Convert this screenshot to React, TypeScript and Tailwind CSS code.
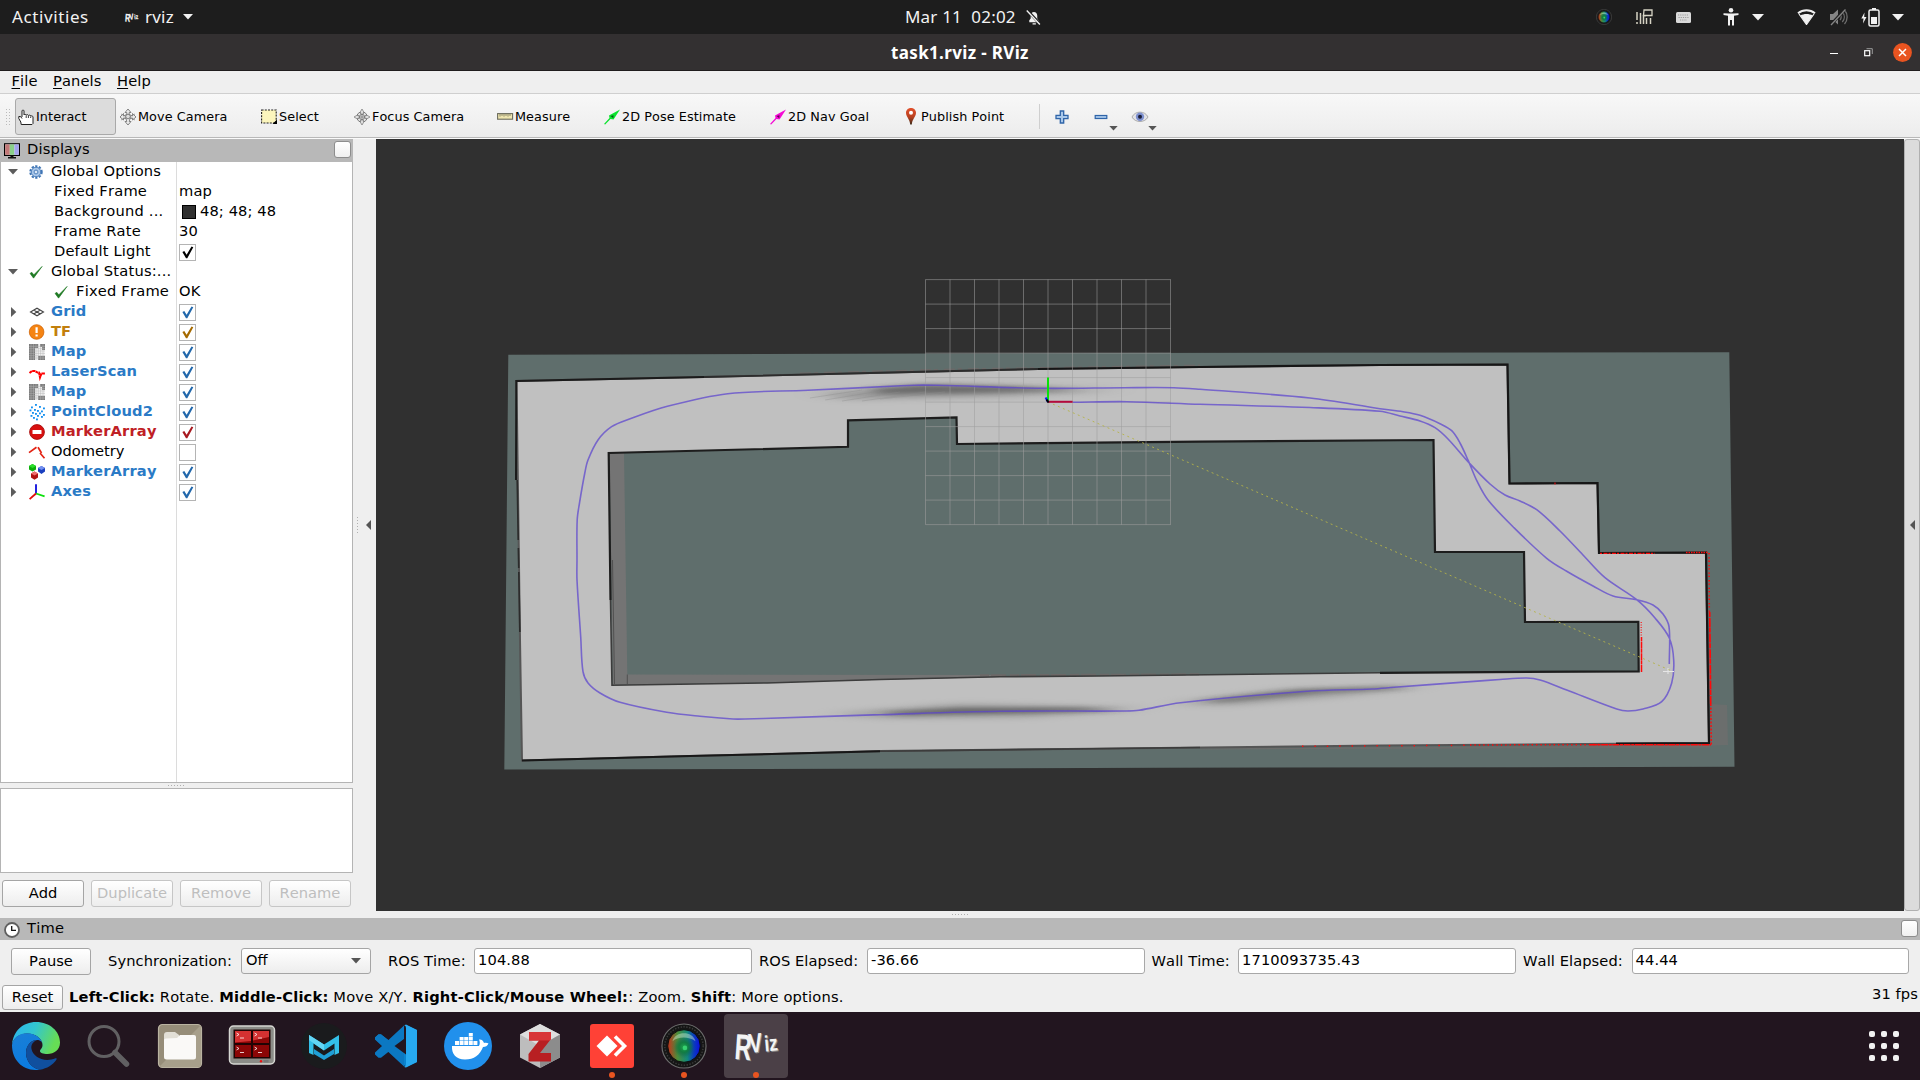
import React from "react";

type Pt = [number, number];

/* Catmull-Rom spline through the given points, as a cubic Bézier path. */
function smooth(p: Pt[]): string {
  let d = `M${p[0][0]} ${p[0][1]}`;
  for (let i = 0; i < p.length - 1; i++) {
    const a = p[Math.max(0, i - 1)];
    const b = p[i];
    const c = p[i + 1];
    const e = p[Math.min(p.length - 1, i + 2)];
    const len = Math.hypot(c[0] - b[0], c[1] - b[1]);
    const t1 = Math.hypot(c[0] - a[0], c[1] - a[1]) || 1;
    const t2 = Math.hypot(e[0] - b[0], e[1] - b[1]) || 1;
    const k = len / 3;
    d += `C${b[0] + ((c[0] - a[0]) / t1) * k} ${b[1] + ((c[1] - a[1]) / t1) * k} ${c[0] - ((e[0] - b[0]) / t2) * k} ${c[1] - ((e[1] - b[1]) / t2) * k} ${c[0]} ${c[1]}`;
  }
  return d;
}

const trajectory: Pt[] = [
  [1072.8, 402.3], [1127, 401.7], [1200, 404.3], [1310, 407.5], [1380, 411.3], [1400, 416], [1420, 421], [1435, 427.7],
  [1448, 439], [1468, 461.7], [1490, 484], [1505, 495], [1520, 501], [1536.7, 509.7], [1560, 531], [1583, 555],
  [1605, 577.7], [1636.7, 599.7], [1655, 618], [1669.3, 638], [1673.7, 660], [1671.7, 683], [1661.7, 701.7],
  [1643, 709], [1628, 711], [1616.7, 709], [1566.7, 690], [1540, 680], [1526.7, 678], [1500, 679.5], [1394, 687.3],
  [1372, 689], [1307, 691.3], [1180.5, 702.7], [1139, 710.3], [1126, 711], [998.6, 711.3], [880, 714.7], [745, 719], [733, 719],
  [700, 716.3], [666.7, 712.3], [620, 702.3], [600, 693], [588, 683], [583, 671.7], [580.7, 636.7], [577, 580],
  [577, 560], [577.2, 520], [579.5, 503], [584.8, 473], [588, 460], [598, 440], [611.6, 426.7], [629.5, 419],
  [667.4, 406.3], [727.7, 393.7], [808, 390.3], [915, 385.2], [937.5, 385.3], [1042, 388.3], [1125, 387.7],
  [1174, 387.7], [1200, 389.3], [1310, 398], [1380, 408.7], [1403, 411.7], [1420, 415.3], [1440, 423.7],
  [1451.7, 430.7], [1460, 443], [1468.3, 460.7], [1477.3, 481.7], [1488, 500], [1513, 526.7], [1546.7, 558.3],
  [1566.7, 571.3], [1593, 586], [1613, 596], [1636.7, 599.7], [1653, 605], [1663, 614], [1669, 626.7], [1669.3, 664],
];

const OUTER =
  "M516.5 381 L704 377 L870 373 L1038 369 L1200 367 L1380 365 L1507.5 364.5 L1509.5 483.5 L1597.5 483 L1599 553 L1706 552.5 L1709 743 L1380 745.5 L1092 748.7 L880 751 L831 752.5 L690 756 L522 760.5 L520 640 Z";
const INNER =
  "M608.7 453 L848 446.8 L848 420.3 L956.5 417.5 L957 444 L1200 441.7 L1433.5 440 L1435 552 L1524 552 L1525 622 L1638 621.8 L1639 671.3 L1380 672.8 L1100 676 L1000 676.8 L880 679.5 L767 683 L612 685.3 Z";

function Viewport() {
  const grid = Array.from({ length: 11 }, (_, i) => i);
  return (
    <svg width={1528} height={772} viewBox="376 139 1528 772" className="block shrink-0 bg-[#303030]">
      <defs>
        <filter id="soft" x="-20%" y="-200%" width="140%" height="500%">
          <feGaussianBlur stdDeviation="9 2.2" />
        </filter>
        <filter id="softer" x="-20%" y="-200%" width="140%" height="500%">
          <feGaussianBlur stdDeviation="14 3" />
        </filter>
      </defs>
      <path d="M508.3 354.7 L1110 353 L1729.3 352.2 L1734.5 766.8 L1160 767.8 L504.3 769.6 Z" fill="#5f6e6c" />
      <path d={`${OUTER} ${INNER}`} fill="#c0c0c0" fillRule="evenodd" />

      {/* uncertain cells next to the inner and outer walls */}
      <path d="M609.5 454 L624 453 L627.3 674.5 L1000 675 L1000 677 L767 682.5 L613 685 Z" fill="#747474" />
      <path d="M1711 704 L1727 705 L1728 745 L1711 745.5 Z" fill="#6b6e6d" />
      <path d="M1200 748.5 L1710 745.5 L1710 747.5 L1200 749.5 Z" fill="#6c6c6b" />
      <path d="M800 373.2 L960 369 L1200 365.3" stroke="#6c6867" strokeWidth="1.4" strokeDasharray="11 3 4 6" fill="none" />
      <path d="M980 675.3 L1200 674.3" stroke="#6c6867" strokeWidth="2" strokeDasharray="9 2 15 4" fill="none" />

      {/* motion smears */}
      <path d="M870 389 L920 385 L1010 387 L1080 390 L960 393 L880 394 Z" fill="#4a4a4a" opacity="0.7" filter="url(#soft)" />
      <path d="M815 394 L940 384 L1120 390 L1000 396 L850 399 Z" fill="#6a6a6a" opacity="0.5" filter="url(#softer)" />
      <path d="M810 398 L862 390 M825 400 L880 391 M842 401 L900 392 M862 401 L925 392 M880 399 L945 392" stroke="#8c8c8c" strokeWidth="1.1" opacity="0.35" />
      <path d="M880 712.5 L960 708 L1080 708 L1120 710.5 L1020 713 L900 715 Z" fill="#3a3a3a" opacity="0.7" filter="url(#soft)" />
      <path d="M830 714 L960 704 L1150 708 L1030 717 L890 718 Z" fill="#6a6a6a" opacity="0.42" filter="url(#softer)" />
      <path d="M1200 701 L1300 690 L1390 687 L1410 688.5 L1320 692.5 L1220 702 Z" fill="#3a3a3a" opacity="0.65" filter="url(#soft)" />
      <path d="M1170 704 L1290 689 L1430 686 L1340 696 L1230 705 Z" fill="#6a6a6a" opacity="0.42" filter="url(#softer)" />

      {/* walls */}
      <path d={OUTER} fill="none" stroke="#555" strokeWidth="2" />
      <path d="M516 480 L516.300 381 L704 377" fill="none" stroke="#1b1b1b" strokeWidth="2" />
      <path d="M704 377 L870 373 L1038 369" fill="none" stroke="#2c2c2c" strokeWidth="1.8" />
      <path d="M1038 369 L1200 367 L1380 365 L1507.5 364.5 L1509.5 483.5 L1597.5 483 L1599 553 L1706 552.5 L1709 743 L1616 743.6" fill="none" stroke="#161616" strokeWidth="2.2" />
      <path d="M517.200 480 L520 640" fill="none" stroke="#2b2b2b" strokeWidth="1.6" strokeDasharray="60 8 20 4" />
      <path d="M522 760.5 L690 756 L831 752.5 L880 751.3" fill="none" stroke="#181818" strokeWidth="2" />
      <path d="M880 751.3 L1092 748.7 L1200 747.5" fill="none" stroke="#3c3c3c" strokeWidth="1.6" />
      <path d="M610.5 600 L608.7 453 L848 446.8 L848 420.3 L956.5 417.5 L957 444 L1200 441.7 L1433.5 440 L1435 552 L1524 552 L1525 622 L1638.3 621.8 L1638.7 671.3 L1380 672.8" fill="none" stroke="#1d1d1d" strokeWidth="2.2" />
      <path d="M610.5 600 L612 685.3 L767 683 L880 679.5 L1000 676.8 L1100 676 L1380 672.8" fill="none" stroke="#3c3c3c" strokeWidth="1.6" />
      <path d="M612.5 560 L614.5 684 M627.3 674.5 L627.3 684" stroke="#505050" strokeWidth="1" fill="none" />

      {/* reference grid */}
      <g stroke="#9f9f9f" strokeOpacity="0.55" strokeWidth="1">
        {grid.map((i) => (
          <path key={i} d={`M${925.5 + i * 24.5} 279.5 V524.7 M925.5 ${279.6 + i * 24.5} H1170.7`} />
        ))}
      </g>

      {/* laser returns */}
      <g stroke="#ff0a0a" fill="none">
        <path d="M1600 553.3 H1655" strokeWidth="1.3" strokeDasharray="2 1.5 4 1" />
        <path d="M1686 552.5 H1708" strokeWidth="1.5" strokeDasharray="1.5 1" />
        <path d="M1709 553 L1709.3 612" strokeWidth="1.6" strokeDasharray="1.3 3 1.3 2" />
        <path d="M1709.7 612 L1710.7 704" strokeWidth="1.7" strokeDasharray="5 1 9 .6" />
        <path d="M1710.8 704 L1711.3 745" strokeWidth="1.4" strokeDasharray="2 1.5" />
        <path d="M1641.2 622 V637" strokeWidth="1.1" strokeDasharray="1 1.5" />
        <path d="M1641.5 637 V672" strokeWidth="1.5" strokeDasharray="4 .5 7 .3" />
        <path d="M1302 746.3 L1470 745.3" strokeWidth="1.5" strokeDasharray="1.4 11" />
        <path d="M1470 745 L1600 744.6" strokeWidth="1.5" strokeDasharray="1.4 3" />
        <path d="M1590 744.7 H1711" strokeWidth="1.6" strokeDasharray="7 .6 3 .6" />
        <path d="M1555 482.5 V484.5" strokeWidth="1" />
      </g>

      <path d={smooth(trajectory)} fill="none" stroke="#5a43cf" strokeOpacity="0.72" strokeWidth="1.6" strokeLinejoin="round" />
      <path d="M1048 402 L1672 671" stroke="#b5b348" strokeWidth="1" strokeDasharray="2 3.4" opacity="0.9" />
      <path d="M1663 671.5 H1674 M1668 668 V674" stroke="#e6e6e6" strokeWidth="1" />

      {/* frame axes */}
      <path d="M1048 402 V377.5" stroke="#08e208" strokeWidth="2" />
      <path d="M1048 401.8 H1072.6" stroke="#b30a3c" strokeWidth="2" />
      <path d="M1045.6 397.5 L1048 402" stroke="#0a14ff" strokeWidth="2" />
      <path d="M1046.5 399.5 L1048.5 402.5" stroke="#000" strokeWidth="2" />
    </svg>
  );
}

/* ---------- small icons ---------- */

const Ico = ({ s = 16, vb = "0 0 16 16", children }: { s?: number; vb?: string; children: React.ReactNode }) => (
  <svg width={s} height={s} viewBox={vb} className="block shrink-0 overflow-visible">
    {children}
  </svg>
);

const Hand = () => (
  <Ico>
    <path d="M4 8V1.8C4 .9 6 .9 6 1.8V6C6.3 5.2 8 5.2 8.2 6.2C8.6 5.4 10.2 5.5 10.5 6.5C11 5.9 12.6 6 12.7 7C13.5 6.6 15 7 15 8V14.5L14 15.5H3.2L2.8 13L.8 9.5V7.5H2.5L4 9.5" fill="#fff" stroke="#222" strokeWidth="1" />
    <path d="M8.2 6.5V9M10.4 7V9M12.7 7.5V9" stroke="#222" strokeWidth=".9" />
  </Ico>
);
const MoveIcon = () => (
  <Ico>
    <path d="M8 0L11 3.5H9.2V5.5L12.5 7V4.5L16 8L12.5 11V9L10 9.5L9.2 12.5H11L8 16L5 12.5H6.8L6 9.5L3.5 9V11L0 8L3.5 4.5V7L6.8 5.5V3.5H5Z" fill="#ececec" stroke="#777" strokeWidth=".9" />
    <path d="M1 5L7 8L1 11M15 5L9 8L15 11" fill="none" stroke="#888" strokeWidth=".8" />
    <circle cx="8" cy="7.5" r="2.3" fill="#ddd" stroke="#666" strokeWidth=".8" />
  </Ico>
);
const SelectIcon = () => (
  <Ico>
    <rect x=".6" y="1" width="14.6" height="13" fill="#fcf6bd" stroke="#222" strokeWidth="1.1" strokeDasharray="2 1.2" />
    <path d="M16 10.5V15H11.5Z" fill="#000" />
  </Ico>
);
const FocusIcon = () => (
  <Ico>
    <g fill="none" stroke="#777">
      <circle cx="8" cy="8" r="5.2" fill="#e4e4e4" strokeWidth="1" />
      <circle cx="8" cy="8" r="2.6" strokeWidth=".9" />
      <path d="M3 8H13M8 3V13" strokeWidth=".8" />
      <path d="M8 0L9.5 2.5V5H6.5V2.5ZM8 16L9.5 13.5V11H6.5V13.5ZM0 8L2.5 6.5H5V9.5H2.5ZM16 8L13.5 6.5H11V9.5H13.5Z" fill="#ddd" strokeWidth=".7" />
    </g>
  </Ico>
);
const MeasureIcon = () => (
  <Ico>
    <rect x=".6" y="4.6" width="15" height="5.6" fill="#efe6b0" stroke="#6b6b5c" strokeWidth="1.1" />
    <path d="M3 5V7.6M5 5V7M7 5V7.6M9 5V7M11 5V7.6M13 5V7" stroke="#77735a" strokeWidth=".8" />
  </Ico>
);
const ArrowIcon = ({ c, d }: { c: string; d: string }) => (
  <Ico>
    <path d="M0 15L5.5 9L5 6.5L16 .5L9.5 10.5L6.5 10L1.2 15.5Z" fill={c} />
    <path d="M6.5 7L9.5 6.2L9.3 9.3Z" fill={d} />
  </Ico>
);
const PinIcon = () => (
  <Ico>
    <defs>
      <linearGradient id="pin" x1="0" y1="0" x2="0" y2="1">
        <stop offset="0" stopColor="#e2502c" />
        <stop offset=".55" stopColor="#b8401f" />
        <stop offset="1" stopColor="#3d2a18" />
      </linearGradient>
    </defs>
    <path d="M8 -1C4.8 -1 3 1.200 3 3.800C3 7.800 6.800 10 7.200 15.500H8.800C9.200 10 13 7.800 13 3.800C13 1.200 11.200 -1 8 -1Z" fill="url(#pin)" />
    <circle cx="8" cy="3.700" r="2" fill="#fff" />
  </Ico>
);
const PlusIcon = () => (
  <Ico s={14} vb="0 0 14 14">
    <path d="M5.3 1H8.7V5.3H13V8.7H8.7V13H5.3V8.7H1V5.3H5.3Z" fill="#a9c8ea" stroke="#2f64a8" strokeWidth="1.3" />
  </Ico>
);
const MinusIcon = () => (
  <Ico s={14} vb="0 0 14 14">
    <rect x="1.2" y="5.5" width="11.6" height="3" fill="#a9c8ea" stroke="#2f64a8" strokeWidth="1.2" />
  </Ico>
);
const EyeIcon = () => (
  <Ico>
    <path d="M0 8C3 1.500 13 1.500 16 8C13 14 3 14 0 8Z" fill="#e3e3e6" stroke="#9a9a9a" strokeWidth=".8" />
    <circle cx="8" cy="7.800" r="4.200" fill="#7d90cf" />
    <circle cx="8" cy="7.800" r="2" fill="#1b1e38" />
  </Ico>
);
const MonitorIcon = () => (
  <Ico>
    <rect x=".6" y=".8" width="14.8" height="11.6" fill="#fff" stroke="#000" strokeWidth="1.2" />
    <rect x="1.2" y="1.4" width="4.6" height="10.4" fill="#c27878" />
    <rect x="5.8" y="1.4" width="4.6" height="10.4" fill="#8ad08a" />
    <rect x="10.4" y="1.4" width="4.4" height="10.4" fill="#a3a3ee" />
    <path d="M6.5 12.5H9.5V14H12V15.5H4V14H6.5Z" fill="#111" />
  </Ico>
);
const ClockIcon = () => (
  <Ico>
    <circle cx="8" cy="8" r="7" fill="#fff" stroke="#5f5f5f" strokeWidth="1.8" />
    <path d="M7.7 4V8.3H12" fill="none" stroke="#111" strokeWidth="1.3" />
  </Ico>
);
const GearIcon = () => (
  <Ico s={14}>
    <circle cx="8" cy="8" r="6.6" fill="none" stroke="#3f75b5" strokeWidth="2.2" strokeDasharray="2.6 1.6" />
    <circle cx="8" cy="8" r="5.4" fill="#a9c6e8" stroke="#3f75b5" strokeWidth="1" />
    <circle cx="8" cy="8" r="2.2" fill="#dbe8f7" stroke="#3f75b5" strokeWidth="1" />
  </Ico>
);
const GreenCheck = () => (
  <Ico s={14}>
    <path d="M1.2 9.6L5.2 15L15 1.6L5.5 11.2L3.2 8.4Z" fill="#1f7a24" stroke="#1f7a24" strokeWidth=".7" />
  </Ico>
);
const GridIcon = () => (
  <Ico>
    <path d="M1.5 8L8 4.2L14.5 8L8 11.8ZM4.7 6L11.3 10M4.7 10L11.3 6" fill="none" stroke="#444" strokeWidth="1.1" />
  </Ico>
);
const WarnIcon = () => (
  <Ico>
    <circle cx="7.6" cy="8" r="7.3" fill="#f58413" stroke="#d06405" strokeWidth=".8" />
    <path d="M7.6 3.2V9M7.6 10.6V12.6" stroke="#fff" strokeWidth="2.2" />
  </Ico>
);
const MapIcon = () => (
  <Ico>
    <path d="M0 0H9V4H6V16H0ZM11 0H16V6H13V3H11ZM9 12H16V16H9Z" fill="#7b7b7b" />
    <path d="M6 4H9V0H11V3H13V6H16V12H9V16H6Z" fill="#f4f4f4" />
    <path d="M2 0V16M4.5 0V16M7 0V16M9.3 0V16M11.6 0V16M14 0V16M0 2.3H16M0 4.7H16M0 7H16M0 9.4H16M0 11.7H16M0 14H16" stroke="#b5b5b5" strokeWidth=".5" />
  </Ico>
);
const LaserIcon = () => (
  <Ico>
    <path d="M.5 9L3 7H6L8.500 8.500H10L11 13.500L12.500 9.500H16" fill="none" stroke="#f00" strokeWidth="2" strokeDasharray="3 .4" />
  </Ico>
);
const CloudIcon = () => (
  <Ico>
    {[[6, 0], [2, 2.5], [10, 2], [14, 3.5], [5, 5], [0.5, 5.5], [8, 6], [12, 6.5], [3, 8], [6, 9], [10, 8.5], [14, 10], [1.5, 11], [8, 11], [12, 12], [4, 13], [7, 14.5]].map(([x, y], i) => (
      <rect key={i} x={x} y={y} width="1.9" height="1.8" fill="#1590f0" />
    ))}
  </Ico>
);
const ErrorIcon = () => (
  <Ico>
    <circle cx="8" cy="8" r="7.4" fill="#d8100f" stroke="#a90b0b" strokeWidth=".9" />
    <rect x="3.5" y="6" width="9" height="4" rx=".6" fill="#fff" />
  </Ico>
);
const OdomIcon = () => (
  <Ico>
    <path d="M0 8.600L7.500 3.200M9 3.200L12.500 9M11 9L15.500 14.300" stroke="#e32313" strokeWidth="1.700" fill="none" />
  </Ico>
);
const MarkersIcon = () => (
  <Ico>
    <path d="M3.5 0L7 2V5.5L3.5 7.5L0 5.5V2Z" fill="#0cae0c" />
    <path d="M3.5 0L7 2L3.5 4L0 2Z" fill="#2be02b" />
    <path d="M12.5 2L16 4V7.5L12.5 10L9 7.5V4Z" fill="#1a3fbf" />
    <path d="M12.5 2L16 4L12.5 6L9 4Z" fill="#7390f0" />
    <path d="M5.5 7.5L9 9.5V13.5L5.5 15.7L2 13.5V9.5Z" fill="#b01212" />
    <path d="M5.5 7.5L9 9.5L5.5 11.5L2 9.5Z" fill="#ef6f6f" />
  </Ico>
);
const AxesIcon = () => (
  <Ico>
    <path d="M7 9.5V.3" stroke="#0a0adc" strokeWidth="1.8" />
    <path d="M7 9.5L15.6 12.3" stroke="#0be00b" strokeWidth="1.8" />
    <path d="M7 9.5L.6 15.2" stroke="#e00b0b" strokeWidth="1.8" />
  </Ico>
);

/* ---------- displays tree ---------- */

type Row = {
  label: string;
  icon?: React.ReactNode;
  arrow?: "open" | "closed";
  indent?: "prop" | "child";
  tone?: "blue" | "amber" | "red";
  track?: string;
  value?: string;
  swatch?: boolean;
  check?: string;
};

const BLUE = "#2268ac";
const rows: Row[] = [
  { label: "Global Options", icon: <GearIcon />, arrow: "open", track: "tracking-[0.15px]" },
  { label: "Fixed Frame", indent: "prop", value: "map", track: "tracking-[0.2px]" },
  { label: "Background ...", indent: "prop", value: "48; 48; 48", swatch: true, track: "tracking-[0.22px]" },
  { label: "Frame Rate", indent: "prop", value: "30", track: "tracking-[0.15px]" },
  { label: "Default Light", indent: "prop", check: "#000", track: "tracking-[0.15px]" },
  { label: "Global Status:...", icon: <GreenCheck />, arrow: "open", track: "tracking-[0.2px]" },
  { label: "Fixed Frame", icon: <GreenCheck />, indent: "child", value: "OK", track: "tracking-[0.2px]" },
  { label: "Grid", icon: <GridIcon />, arrow: "closed", tone: "blue", check: BLUE },
  { label: "TF", icon: <WarnIcon />, arrow: "closed", tone: "amber", check: "#a66a00" },
  { label: "Map", icon: <MapIcon />, arrow: "closed", tone: "blue", check: BLUE },
  { label: "LaserScan", icon: <LaserIcon />, arrow: "closed", tone: "blue", check: BLUE },
  { label: "Map", icon: <MapIcon />, arrow: "closed", tone: "blue", check: BLUE },
  { label: "PointCloud2", icon: <CloudIcon />, arrow: "closed", tone: "blue", check: BLUE },
  { label: "MarkerArray", icon: <ErrorIcon />, arrow: "closed", tone: "red", check: "#a81a20" },
  { label: "Odometry", icon: <OdomIcon />, arrow: "closed", check: "none" },
  { label: "MarkerArray", icon: <MarkersIcon />, arrow: "closed", tone: "blue", check: BLUE },
  { label: "Axes", icon: <AxesIcon />, arrow: "closed", tone: "blue", check: BLUE },
];

const tones = {
  blue: "font-bold text-[#2a7ac6] tracking-[0.16px]",
  amber: "font-bold text-[#c27f0c]",
  red: "font-bold text-[#bf2025] tracking-[0.16px]",
};

function TreeRow({ r }: { r: Row }) {
  return (
    <div className="flex h-5 items-center whitespace-pre">
      <div className="flex h-5 w-[175px] shrink-0 items-center overflow-hidden">
        {r.indent === "prop" ? (
          <div className="w-[53px] shrink-0" />
        ) : r.indent === "child" ? (
          <div className="flex w-[75px] shrink-0 justify-end pr-[8px]">{r.icon}</div>
        ) : (
          <>
            <div className="flex w-[28px] shrink-0 items-center pl-[7px]">
              {r.arrow === "open" ? (
                <svg width="10" height="6"><path d="M0 0H10L5 5.5Z" fill="#5c5c5c" /></svg>
              ) : (
                <svg width="6" height="10" className="ml-[3px]"><path d="M0 0V10L5.3 5Z" fill="#5c5c5c" /></svg>
              )}
            </div>
            <div className="flex w-[22px] shrink-0 items-center">{r.icon}</div>
          </>
        )}
        <span className={"pb-px " + (r.tone ? tones[r.tone] : r.track ?? "")}>{r.label}</span>
      </div>
      <div className="flex h-5 grow items-center pl-[3px]">
        {r.swatch && <div className="mr-[4px] ml-[3px] size-[14px] border border-black bg-[#303030]" />}
        {r.value && <span className="pb-px tracking-[0.1px]">{r.value}</span>}
        {r.check && (
          <div className="mt-[1px] flex size-[17px] items-center justify-center border border-[#b4b4b4] bg-white">
            {r.check !== "none" && (
              <svg width="12" height="13" viewBox="0 0 12 13">
                <path d="M.4 6L2.3 5L4.6 8.8L9.5 .6L11.3 1.2L5.3 12.2H4Z" fill={r.check} />
              </svg>
            )}
          </div>
        )}
      </div>
    </div>
  );
}

/* ---------- toolbar ---------- */

const tools: { label: string; icon: React.ReactNode; cls: string }[] = [
  { label: "Interact", icon: <Hand />, cls: "w-[101px] mr-px rounded-[3px] border border-[#a9a9a9] bg-[#dcdcdc] pl-[2px]" },
  { label: "Move Camera", icon: <MoveIcon />, cls: "w-[141px] pl-[3px]" },
  { label: "Select", icon: <SelectIcon />, cls: "w-[93px] pl-[3px]" },
  { label: "Focus Camera", icon: <FocusIcon />, cls: "w-[143px] pl-[3px]" },
  { label: "Measure", icon: <MeasureIcon />, cls: "w-[107px] pl-[3px]" },
  { label: "2D Pose Estimate", icon: <ArrowIcon c="#0be32e" d="#045c14" />, cls: "w-[166px] pl-[3px]" },
  { label: "2D Nav Goal", icon: <ArrowIcon c="#f40ad4" d="#5f0453" />, cls: "w-[133px] pl-[3px]" },
  { label: "Publish Point", icon: <PinIcon />, cls: "w-[139px] pl-[3px]" },
];

const Caret = ({ cls }: { cls: string }) => (
  <svg width="10" height="6" viewBox="0 0 10 6" className={cls}>
    <path d="M0 0H10L5 5.5Z" fill="currentColor" />
  </svg>
);

const MenuItem = ({ t, cls }: { t: string; cls: string }) => (
  <span className={cls}>
    <span className="underline underline-offset-[2px]">{t[0]}</span>
    {t.slice(1)}
  </span>
);

const btn = "flex items-center justify-center rounded-[3px] border bg-gradient-to-b from-white to-[#ededed]";

const Field = ({ label, value, cls }: { label: string; value: string; cls: string }) => (
  <>
    <span className={cls}>{label}</span>
    <div className="flex h-[26px] w-[277.5px] shrink-0 items-center rounded-[3px] border border-[#a8a8a8] bg-white pl-[3px] pb-px tracking-[0.12px]">{value}</div>
  </>
);

/* ---------- dock ---------- */

const Lens = ({ s, id }: { s: number; id: string }) => (
  <svg width={s} height={s} viewBox="0 0 48 48" className="block">
    <defs>
      <radialGradient id={id} cx=".5" cy=".55" r=".5">
        <stop offset="0" stopColor="#22a850" />
        <stop offset=".4" stopColor="#0d7a3c" stopOpacity=".85" />
        <stop offset=".8" stopColor="#0b5a4a" stopOpacity=".1" />
        <stop offset="1" stopColor="#0b2a4a" stopOpacity="0" />
      </radialGradient>
      <linearGradient id={id + "b"} x1="0" y1="0" x2="1" y2="0">
        <stop offset="0" stopColor="#c5321c" />
        <stop offset=".3" stopColor="#4c8f3a" />
        <stop offset=".6" stopColor="#128a7a" />
        <stop offset=".8" stopColor="#0b3cc0" />
        <stop offset="1" stopColor="#0b0ce0" />
      </linearGradient>
    </defs>
    <circle cx="24" cy="24" r="23" fill="#151515" stroke="#6d6d6d" strokeWidth="1.2" />
    <circle cx="24" cy="24" r="20" fill="none" stroke="#3b3b3b" strokeWidth="1.500" strokeDasharray="1.5 1.5" />
    <circle cx="24" cy="24" r="17" fill={`url(#${id}b)`} stroke="#0a0a0a" strokeWidth="1" />
    <circle cx="24" cy="24" r="13" fill={`url(#${id})`} />
    <path d="M12 19C15 8 33 8 36 19C29 14 18 14 12 19Z" fill="#d5ecd5" opacity=".45" />
    <circle cx="25" cy="26" r="2.4" fill="#3ee07a" opacity=".8" />
  </svg>
);

const EdgeIcon = () => (
  <svg width="48" height="48" viewBox="0 0 48 48" className="block">
    <defs>
      <linearGradient id="e1" x1="0" y1="0" x2="1" y2=".3">
        <stop offset="0" stopColor="#2ab4f2" />
        <stop offset=".5" stopColor="#33c6cf" />
        <stop offset="1" stopColor="#66dd55" />
      </linearGradient>
      <linearGradient id="e2" x1="0" y1="0" x2=".4" y2="1">
        <stop offset="0" stopColor="#1b7fd6" />
        <stop offset="1" stopColor="#0a7be0" />
      </linearGradient>
    </defs>
    <path d="M24 0C38 0 48 9.500 48 20.500C48 28 42 32 35.500 32C31 32 28 30.800 28 29C28 27.500 30.500 26.500 30.500 23C30.500 17 24 11.500 15 11.500C7 11.500 1 16.500 0 23C1 9 11 0 24 0Z" fill="url(#e1)" />
    <path d="M0 23C1 16 7 11.200 15 11.200C24 11.200 30.200 17 30.400 22.500C30.400 20 28 18 25 18C20 18 14 22.500 14 31C14 39 20 46.500 28 47.700C12 50 0 39 0 23Z" fill="url(#e2)" />
    <path d="M25 18C20 18 14 22.500 14 31C14 39 20 46.500 28 47.700C35 46.500 41 43 44.500 37.500C45 36.500 44.300 36 43.500 36.300C32 41 21 35 19.500 27C18.800 23 21 19.500 25 18Z" fill="#104f9e" />
  </svg>
);
const SearchIcon = () => (
  <svg width="48" height="48" viewBox="0 0 48 48" className="block">
    <circle cx="20" cy="19.500" r="15" fill="none" stroke="#616062" strokeWidth="3" />
    <path d="M31 30.500L42.500 42" stroke="#616062" strokeWidth="5.500" strokeLinecap="round" />
  </svg>
);
const FilesIcon = () => (
  <svg width="48" height="48" viewBox="0 0 48 48" className="block">
    <rect x="2.500" y="2.500" width="43" height="43" rx="4" fill="#968d79" stroke="#bab3a1" strokeWidth="1.200" />
    <path d="M45 3L3 45H41Q45 45 45 41Z" fill="#a79f8b" />
    <path d="M8 13Q8 10 11 10H19L23 13V20H8Z" fill="#e2dfd6" />
    <path d="M8 18Q8 16.500 10 16.500L21 16L24 13H38Q40 13 40 15V35Q40 37.500 37.500 37.500H10.500Q8 37.500 8 35Z" fill="#faf9f7" />
  </svg>
);
const TerminatorIcon = () => (
  <svg width="48" height="48" viewBox="0 0 48 48" className="block">
    <rect x="1.500" y="4" width="45" height="38" rx="4" fill="#8b8c87" stroke="#d6d6d2" strokeWidth="1.500" />
    <rect x="5.500" y="7.500" width="37" height="29" fill="#200404" />
    <g fill="#8c0606">
      <rect x="7" y="9" width="16" height="12" /><rect x="25" y="9" width="16" height="12" />
      <rect x="7" y="23" width="16" height="12" /><rect x="25" y="23" width="16" height="12" />
    </g>
    <path d="M7 9H23V19L7 20.500ZM25 9H41V15L25 18.500Z" fill="#e23a3a" opacity=".85" />
    <g stroke="#fff" strokeWidth=".8" fill="none">
      <path d="M8.500 11L11 12.500L8.500 14M12 16H16M26.500 11L29 12.500L26.500 14M30 16H34M8.500 25L11 26.500L8.500 28M12 30.500H16M26.500 25L29 26.500L26.500 28M30 30.500H34" />
    </g>
    <circle cx="33" cy="39.300" r="1.200" fill="#e11" />
    <rect x="35.500" y="38" width="5" height="2.500" fill="#777" />
  </svg>
);
const MIcon = () => (
  <svg width="48" height="48" viewBox="0 0 48 48" className="block">
    <circle cx="24" cy="24" r="23" fill="#1a1b1d" />
    <path d="M9 13L24 22.500L39 13V31L34.500 33V21.500L24 28.500L13.500 21.500V33L9 31Z" fill="#33c0e8" />
    <path d="M14 27L24 33.500L34 27V32L24 38L14 32Z" fill="#1f9fd6" />
    <path d="M9 13L24 22.500V28.500L9 18Z" fill="#62d6f5" />
  </svg>
);
const CodeIcon = () => (
  <svg width="48" height="48" viewBox="0 0 48 48" className="block">
    <path d="M34 3L45 8V40L34 45L3.500 17.500L3 15.500L6.500 12.500L9 12.500L34 32Z" fill="#0a84cf" />
    <path d="M32 3.500L3 30.500V32.500L6.500 35.800L9 35.800L34 16V32L9 12.300H6.500L3 15.500V17.500L32 44.500Z" fill="#0b78c2" />
    <path d="M34 2.500L45 8V40L34 45.500Q32.500 45.500 32 44.500Q34 45 34 42V6Q34 3 32 3.500Z" fill="#27a9f0" />
    <path d="M34 15.500V32.500L22.500 24Z" fill="#22151f" />
  </svg>
);
const DockerIcon = () => (
  <svg width="48" height="48" viewBox="0 0 48 48" className="block">
    <circle cx="24" cy="24" r="24" fill="#2190ec" />
    <path d="M8 24H35C36 22 36 19.500 35 17.500C37.500 17 39.500 19 40 21C41.500 20.600 43.500 20.800 44.500 21.500C43.500 24 41.500 25 39 25C36 33 30 37.500 21 37.500C12 37.500 7.500 32 8 24Z" fill="#fff" />
    <g fill="#fff">
      <rect x="11" y="19" width="4" height="4" /><rect x="15.600" y="19" width="4" height="4" /><rect x="20.200" y="19" width="4" height="4" /><rect x="24.800" y="19" width="4" height="4" /><rect x="29.400" y="19" width="4" height="4" />
      <rect x="15.600" y="15" width="4" height="3.500" /><rect x="20.200" y="15" width="4" height="3.500" /><rect x="24.800" y="15" width="4" height="3.500" />
      <rect x="24.800" y="11" width="4" height="3.500" />
    </g>
  </svg>
);
const ZIcon = () => (
  <svg width="48" height="48" viewBox="0 0 48 48" className="block">
    <path d="M24 2L44 12.500V35.500L24 46L4 35.500V12.500Z" fill="#bdbdbd" />
    <path d="M24 2L44 12.500L24 24L4 12.500Z" fill="#dedede" />
    <path d="M44 12.500V35.500L24 46V24Z" fill="#8c8c8c" />
    <path d="M13 10H35V17L24 31H35V39.500H12.500V32L23 18.500H13Z" fill="#b81f22" />
    <path d="M13 10H35V17L34 18.500H13Z" fill="#d83436" />
  </svg>
);
const AnyDeskIcon = () => (
  <svg width="48" height="48" viewBox="0 0 48 48" className="block">
    <rect x="2" y="2" width="44" height="44" rx="3" fill="#ff4136" />
    <path d="M19 13.500L29.500 24L19 34.500L8.500 24Z" fill="#fff" />
    <path d="M27 14.500L36.500 24L27 33.500" fill="none" stroke="#fff" strokeWidth="3.600" />
  </svg>
);
const RvizMark = ({ w, cls }: { w: number; cls: string }) => (
  <svg width={w} height={w} viewBox="0 0 48 48" className={cls}>
    <g fontFamily="Liberation Sans, sans-serif" fontWeight="bold">
      {[{ c: "#8a8a8a", t: "translate(1 1)" }, { c: "#f4f4f4", t: "" }].map((l) => (
        <g key={l.c} fill={l.c} transform={l.t}>
          <text transform="translate(2 37) rotate(4) scale(.7 1.1)" fontSize="33">R</text>
          <text transform="translate(17.500 31) rotate(-6) scale(.8 1.050)" fontSize="26">V</text>
          <text transform="translate(33 29.500) rotate(-5) scale(.78 1)" fontSize="22">iz</text>
        </g>
      ))}
    </g>
  </svg>
);

const dock: { icon: React.ReactNode; run?: boolean; active?: boolean }[] = [
  { icon: <EdgeIcon /> },
  { icon: <SearchIcon /> },
  { icon: <FilesIcon /> },
  { icon: <TerminatorIcon /> },
  { icon: <MIcon /> },
  { icon: <CodeIcon /> },
  { icon: <DockerIcon /> },
  { icon: <ZIcon /> },
  { icon: <AnyDeskIcon />, run: true },
  { icon: <Lens s={46} id="lensDock" />, run: true },
  { icon: <RvizMark w={48} cls="block" />, run: true, active: true },
];

export default function App() {
  return (
    <div className="flex h-[1080px] w-[1920px] flex-col overflow-hidden bg-[#efefef] font-['DejaVu_Sans',sans-serif] text-[14.67px] leading-none text-black [font-kerning:none]">
      {/* desktop top bar */}
      <header className="flex h-[34px] shrink-0 items-center bg-[#1d1d1d] font-['Noto_Sans','Open_Sans',sans-serif] text-[17px] text-[#f2f2f2]">
        <div className="flex w-[892px] shrink-0 items-center pl-[12px]">
          <span className="w-[112px] pb-px tracking-[0.6px]">Activities</span>
          <RvizMark w={15} cls="block" />
          <span className="ml-[6px] w-[38px] pb-px tracking-[0.2px]">rviz</span>
          <Caret cls="text-[#f2f2f2]" />
        </div>
        <div className="flex grow items-center pl-[13px]">
          <span className="w-[121px] whitespace-pre pb-px tracking-[0.2px]">Mar 11  02:02</span>
          <Ico s={15}>
            <path d="M3.500 13V11L5 9V6C5 3.500 6.500 2 8.500 2C10.500 2 12 3.500 12 6V9L14 12V13ZM7 14H10.500V15.500H7Z" fill="#f2f2f2" />
            <path d="M1.500 .5L15.500 15.500" stroke="#1d1d1d" strokeWidth="3" />
            <path d="M.8 .5L14.800 15.500" stroke="#f2f2f2" strokeWidth="1.400" />
          </Ico>
        </div>
        <div className="flex shrink-0 items-center pr-[16px]">
          <Lens s={16} id="lensTray" />
          <svg width="17" height="17" viewBox="0 0 17 17" className="ml-[24px]">
            <path d="M1 3V11M1 13V15M4.500 4V15M7.500 15V6.500H10M10.500 9V15M14.500 9V15" stroke="#d6d3c4" strokeWidth="1.500" fill="none" />
            <path d="M8 1H16V6.500H7.500Z" fill="#1d1d1d" stroke="#d6d3c4" strokeWidth="1.300" />
          </svg>
          <svg width="15" height="11" viewBox="0 0 15 11" className="ml-[23px]">
            <rect width="15" height="11" rx="1.500" fill="#dadada" />
            <path d="M2 3H13M2.500 5.500H13M4 8H11" stroke="#9a9a9a" strokeWidth="1" strokeDasharray="1.200 1" />
          </svg>
          <svg width="16" height="18" viewBox="0 0 16 18" className="ml-[32px]">
            <circle cx="8" cy="2.300" r="2.300" fill="#f2f2f2" />
            <path d="M.5 5.300L6 5.600H10L15.500 5.300V6.900L11 7.700V17.500H9V12H7V17.500H5V7.700L.5 6.900Z" fill="#f2f2f2" />
          </svg>
          <svg width="12" height="7" className="ml-[13px]"><path d="M0 0H12L6 6.500Z" fill="#f2f2f2" /></svg>
          <svg width="19" height="16" viewBox="0 0 19 16" className="ml-[33px]">
            <path d="M9.500 15.500L3.300 6.500C7 4.500 12 4.500 15.700 6.500Z" fill="#f2f2f2" />
            <path d="M1 4.200C6 .2 13 .2 18 4.200" fill="none" stroke="#f2f2f2" strokeWidth="2" />
            <path d="M2 5L9.500 15.500L17 5" fill="none" stroke="#f2f2f2" strokeWidth="1.200" />
          </svg>
          <svg width="19" height="18" viewBox="0 0 19 18" className="ml-[13px]">
            <path d="M1 6H4L9 1.500V16.500L4 12H1Z" fill="#858585" />
            <path d="M11 6C12.500 7.500 12.500 10.500 11 12M13.300 4C16 7 16 11 13.300 14M15.500 2C19 6 19 12 15.500 16" fill="none" stroke="#6e6e6e" strokeWidth="1.300" />
            <path d="M2 16.500L16 1.500" stroke="#1d1d1d" strokeWidth="3" />
            <path d="M2 17L16.500 1.500" stroke="#858585" strokeWidth="1.300" />
          </svg>
          <svg width="19" height="19" viewBox="0 0 19 19" className="ml-[13px]">
            <path d="M3.500 4.500L.3 10.500H2.500L2 15.500L5.500 9H3.200Z" fill="#f2f2f2" />
            <rect x="8" y="2" width="10" height="16" rx="1.500" fill="none" stroke="#f2f2f2" strokeWidth="1.500" />
            <rect x="11" y="0" width="4" height="2" fill="#f2f2f2" />
            <rect x="10" y="9" width="6" height="7" fill="#f2f2f2" />
          </svg>
          <svg width="12" height="7" className="ml-[12px]"><path d="M0 0H12L6 6.500Z" fill="#f2f2f2" /></svg>
        </div>
      </header>

      {/* window title */}
      <div className="flex h-[37px] shrink-0 items-center border-b border-[#1f1c1d] bg-[#333031] font-['Noto_Sans','Open_Sans',sans-serif] text-[17px] font-bold text-white">
        <div className="w-[891px] shrink-0" />
        <span className="w-[939px] tracking-[0.35px]">task1.rviz - RViz</span>
        <div className="mt-[3px] h-px w-2 bg-white" />
        <svg width="9" height="9" viewBox="0 0 9 9" className="ml-[26px]">
          <path d="M2.500 .7H8.300V6" fill="none" stroke="#9a9a9a" />
          <rect x=".7" y="2.700" width="5" height="5" fill="none" stroke="#fff" strokeWidth="1.200" />
        </svg>
        <svg width="19" height="19" viewBox="0 0 19 19" className="ml-[20px]">
          <circle cx="9.500" cy="9.500" r="9.400" fill="#e95420" />
          <path d="M6 6L13 13M13 6L6 13" stroke="#fff" strokeWidth="1.500" />
        </svg>
      </div>

      {/* menus */}
      <nav className="flex h-[23px] shrink-0 items-center border-b border-[#cfcfcf] pb-px pl-[11.500px] tracking-[0.1px]">
        <MenuItem t="File" cls="w-[41.500px]" />
        <MenuItem t="Panels" cls="w-[64px]" />
        <MenuItem t="Help" cls="w-[60px]" />
      </nav>

      {/* tools */}
      <div className="flex h-[45px] shrink-0 items-center border-b border-[#fafafa] bg-gradient-to-b from-[#f8f8f8] to-[#ececec] pt-px text-[12.8px] tracking-[0.08px] shadow-[inset_0_-1px_0_#b8b8b8]">
        <svg width="15" height="20" className="shrink-0">
          <path d="M6.500 2V18M9.500 2V18" stroke="#bbb" strokeWidth="1" strokeDasharray="1 2" />
        </svg>
        {tools.map((t) => (
          <div key={t.label} className={"flex h-[37px] shrink-0 items-center gap-[2px] whitespace-nowrap " + t.cls}>
            {t.icon}
            <span className="pt-px">{t.label}</span>
          </div>
        ))}
        <div className="h-[25px] w-px bg-[#cfcfcf]" />
        <div className="ml-[15px]"><PlusIcon /></div>
        <div className="relative ml-[25px] flex">
          <MinusIcon />
          <Caret cls="absolute top-[16px] left-[15px] h-[5px] w-[9px] text-[#555]" />
        </div>
        <div className="relative ml-[24px] flex">
          <EyeIcon />
          <Caret cls="absolute top-[17px] left-[16px] h-[5px] w-[9px] text-[#555]" />
        </div>
      </div>

      {/* main split */}
      <main className="flex h-[772px] shrink-0">
        <aside className="flex w-[353px] shrink-0 flex-col">
          <div className="flex h-[23px] shrink-0 items-center bg-[#b8b8b8] pr-[2px] pl-[4px]">
            <div className="mt-px"><MonitorIcon /></div>
            <span className="ml-[7px] grow pb-[2px] tracking-[0.15px]">Displays</span>
            <div className="mb-[2px] size-[17px] rounded-[3px] border border-[#8d8d8d] bg-gradient-to-b from-white to-[#f0f0f0]" />
          </div>
          <div className="flex h-[621px] shrink-0 flex-col border-r border-b border-l border-[#b4b4b4] bg-[linear-gradient(to_right,white_175px,#dcdcdc_175px,#dcdcdc_176px,white_176px)]">
            {rows.map((r, i) => (
              <TreeRow key={i} r={r} />
            ))}
          </div>
          <div className="flex h-[5px] shrink-0 items-center justify-center">
            <div className="h-px w-[17px] bg-[repeating-linear-gradient(to_right,#b0b0b0_0_1px,transparent_1px_3px)]" />
          </div>
          <div className="h-[85px] shrink-0 border border-[#b4b4b4] bg-white" />
          <div className="mt-[7px] flex gap-[7px] pl-[2px]">
            {["Add", "Duplicate", "Remove", "Rename"].map((b, i) => (
              <div key={b} className={btn + " h-[27px] w-[82px] " + (i ? "border-[#c6c6c6] text-[#bebebe]" : "border-[#a5a5a5]")}>
                {b}
              </div>
            ))}
          </div>
        </aside>
        <div className="flex w-[23px] shrink-0 items-center pl-[4px]">
          <div className="h-[17px] w-px bg-[repeating-linear-gradient(to_bottom,#b0b0b0_0_1px,transparent_1px_3px)]" />
          <svg width="5" height="10" className="ml-[8px]"><path d="M5 0V10L0 5Z" fill="#555" /></svg>
        </div>
        <Viewport />
        <div className="flex w-4 items-center justify-center rounded-[3px] border border-[#b0b0b0] bg-[#dcdcdc]">
          <svg width="5" height="10"><path d="M5 0V10L0 5Z" fill="#555" /></svg>
        </div>
      </main>
      <div className="flex h-[7px] shrink-0 items-center justify-center">
        <div className="h-px w-[17px] bg-[repeating-linear-gradient(to_right,#b0b0b0_0_1px,transparent_1px_3px)]" />
      </div>

      {/* time panel */}
      <section className="flex h-[94px] shrink-0 flex-col">
        <div className="flex h-[22px] shrink-0 items-center bg-[#b8b8b8] pr-[2px] pl-[4px]">
          <div className="mt-[2px]"><ClockIcon /></div>
          <span className="ml-[7px] grow pb-px tracking-[0.2px]">Time</span>
          <div className="mb-[1px] size-[17px] rounded-[3px] border border-[#8d8d8d] bg-gradient-to-b from-white to-[#f0f0f0]" />
        </div>
        <div className="flex h-[42px] shrink-0 items-center pl-[11px] whitespace-nowrap">
          <div className={btn + " h-[27px] w-[80px] shrink-0 border-[#a5a5a5]"}>Pause</div>
          <span className="ml-[17px] w-[133px] shrink-0 tracking-[0.08px]">Synchronization:</span>
          <div className={btn + " mr-[17px] h-[26px] w-[130px] shrink-0 border-[#a5a5a5]"}>
            <span className="grow pb-px pl-[4px]">Off</span>
            <Caret cls="mr-[9px] text-[#555]" />
          </div>
          <Field label="ROS Time:" value="104.88" cls="w-[86px] shrink-0 tracking-[0.08px]" />
          <Field label="ROS Elapsed:" value="-36.66" cls="ml-[7.500px] w-[108px] shrink-0 tracking-[0.08px]" />
          <Field label="Wall Time:" value="1710093735.43" cls="ml-[7px] w-[86.500px] shrink-0 tracking-[0.08px]" />
          <Field label="Wall Elapsed:" value="44.44" cls="ml-[7.500px] w-[108.500px] shrink-0 tracking-[0.08px]" />
        </div>
        <div className="flex h-[30px] items-center pl-[2px] whitespace-nowrap">
          <div className={btn + " mt-[1px] h-[25px] w-[61px] shrink-0 border-[#a5a5a5]"}>Reset</div>
          <span className="ml-[6px] grow tracking-[0.19px]">
            <b>Left-Click:</b> Rotate. <b>Middle-Click:</b> Move X/Y. <b>Right-Click/Mouse Wheel:</b>: Zoom. <b>Shift</b>: More options.
          </span>
          <span className="mr-[2px] mb-[6px] tracking-[0.1px]">31 fps</span>
        </div>
      </section>

      {/* dock */}
      <footer className="flex h-[68px] shrink-0 items-center gap-[8px] bg-[#22151f] pl-[4px]">
        {dock.map((d, i) => (
          <div key={i} className={"relative flex size-[64px] items-center justify-center rounded-[4px] " + (d.active ? "bg-[#4b4047]" : "")}>
            {d.icon}
            {d.run && <div className="absolute bottom-[0px] left-[29px] size-[6px] rounded-full bg-[#e95420]" />}
          </div>
        ))}
        <div className="mr-[21px] ml-auto grid grid-cols-3 gap-[6px]">
          {Array.from({ length: 9 }, (_, i) => (
            <div key={i} className="size-[6px] rounded-[2px] bg-[#f2f2f2]" />
          ))}
        </div>
      </footer>
    </div>
  );
}
